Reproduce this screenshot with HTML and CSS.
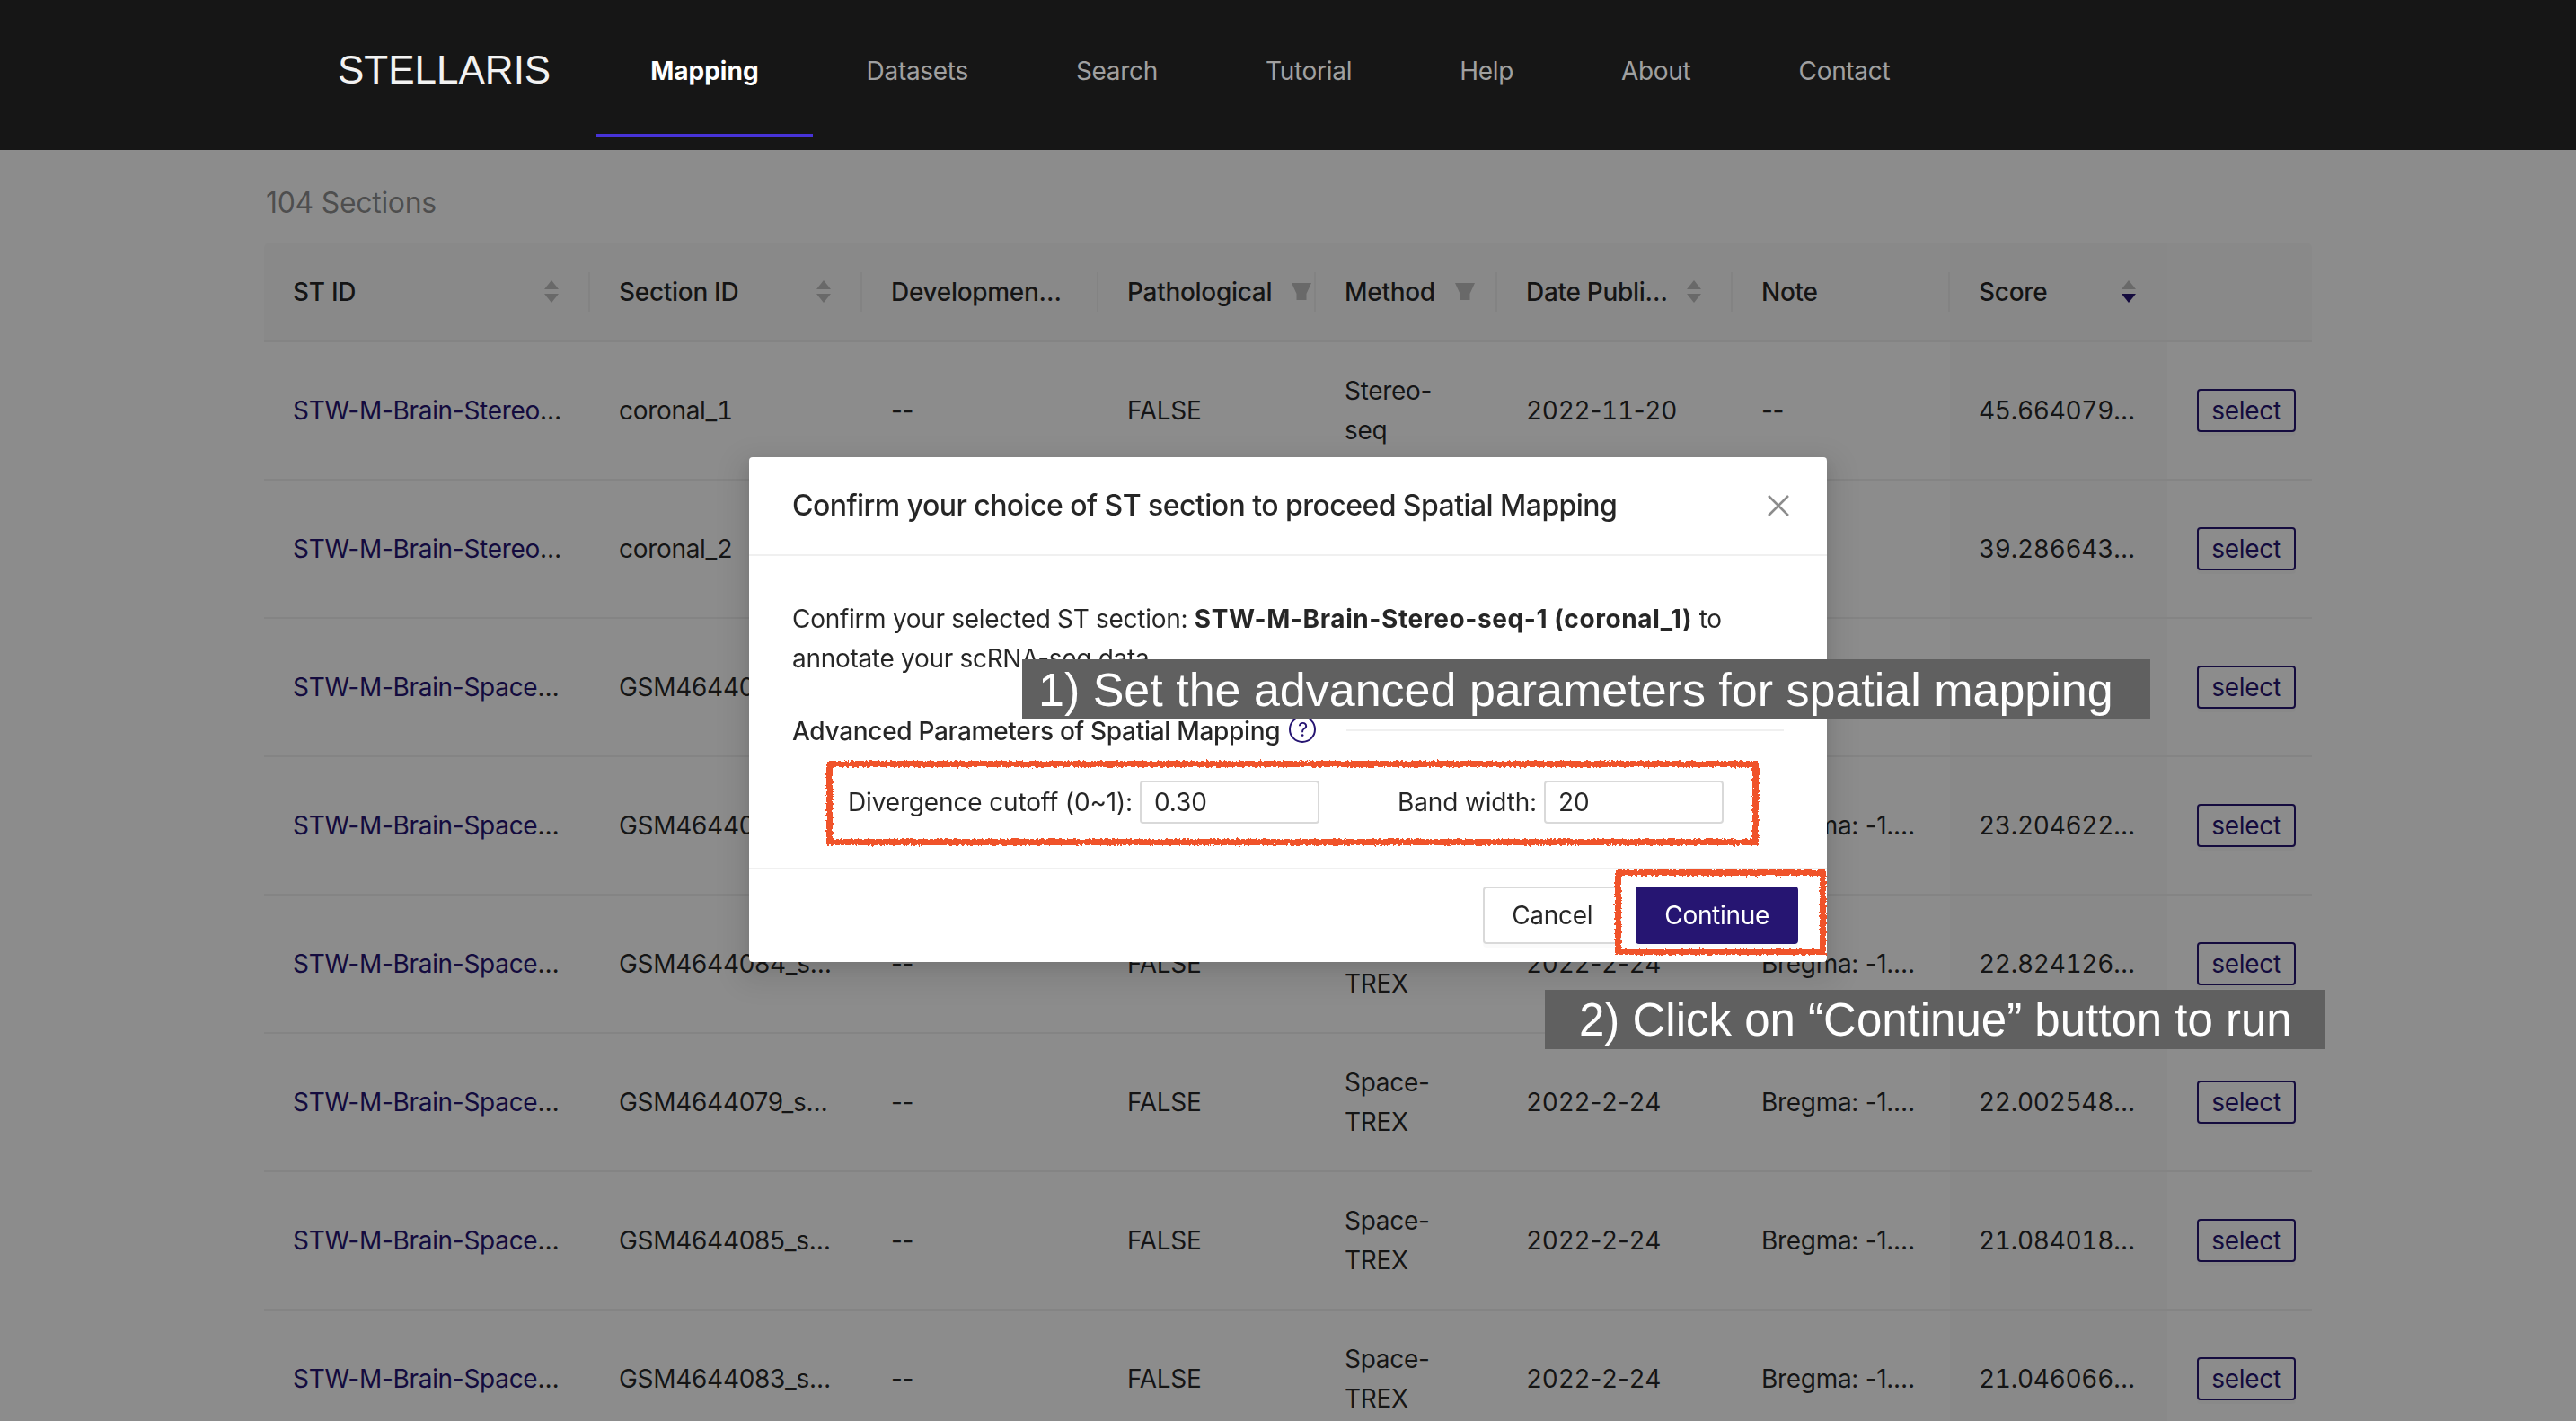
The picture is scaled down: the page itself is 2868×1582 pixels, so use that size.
FILE: index.html
```html
<!DOCTYPE html>
<html>

<head>
    <title>STELLARIS</title>
    <link rel="stylesheet" href="styles.css">
</head>

<body>
    <nav class="topbar">
        <div class="logo">STELLARIS</div>
        <a class="nav-item active">Mapping</a>
        <a class="nav-item">Datasets</a>
        <a class="nav-item">Search</a>
        <a class="nav-item">Tutorial</a>
        <a class="nav-item">Help</a>
        <a class="nav-item">About</a>
        <a class="nav-item">Contact</a>
    </nav>

    <main class="content">
        <div class="section-count">104 Sections</div>
        <table class="st-table">
            <colgroup>
                <col class="c-stid">
                <col class="c-section">
                <col class="c-dev">
                <col class="c-path">
                <col class="c-method">
                <col class="c-date">
                <col class="c-note">
                <col class="c-score">
                <col class="c-action">
            </colgroup>
            <thead>
                <tr>
                    <th>
                        <div class="th-inner"><span class="th-label">ST ID</span><span class="sorter"><i class="up"></i><i class="down"></i></span></div>
                    </th>
                    <th>
                        <div class="th-inner"><span class="th-label">Section ID</span><span class="sorter"><i class="up"></i><i class="down"></i></span></div>
                    </th>
                    <th>
                        <div class="th-inner"><span class="th-label">Developmental Stage</span></div>
                    </th>
                    <th class="th-filter">
                        <div class="th-inner"><span>Pathological</span><svg class="funnel" viewBox="0 0 22 19"><path d="M0 0H22L16.5 12V19H5.5V12Z"/></svg></div>
                    </th>
                    <th class="th-filter">
                        <div class="th-inner"><span>Method</span><svg class="funnel" viewBox="0 0 22 19"><path d="M0 0H22L16.5 12V19H5.5V12Z"/></svg></div>
                    </th>
                    <th>
                        <div class="th-inner"><span class="th-label">Date Published</span><span class="sorter"><i class="up"></i><i class="down"></i></span></div>
                    </th>
                    <th>
                        <div class="th-inner"><span class="th-label">Note</span></div>
                    </th>
                    <th class="sorted">
                        <div class="th-inner"><span class="th-label">Score</span><span class="sorter"><i class="up"></i><i class="down on"></i></span></div>
                    </th>
                    <th class="no-divider"></th>
                </tr>
            </thead>
            <tbody>
                <tr>
                    <td class="clip st-cell"><a class="st-link">STW-M-Brain-Stereo-seq-1</a></td>
                    <td class="clip num">coronal_1</td>
                    <td>--</td>
                    <td>FALSE</td>
                    <td>Stereo-seq</td>
                    <td><span class="num">2022</span>-<span class="num">11</span>-<span class="num">20</span></td>
                    <td>--</td>
                    <td class="clip sorted num">45.66407912345</td>
                    <td class="action"><button class="btn-select">select</button></td>
                </tr>
                <tr>
                    <td class="clip st-cell"><a class="st-link">STW-M-Brain-Stereo-seq-1</a></td>
                    <td class="clip num">coronal_2</td>
                    <td>--</td>
                    <td>FALSE</td>
                    <td>Stereo-seq</td>
                    <td><span class="num">2022</span>-<span class="num">11</span>-<span class="num">20</span></td>
                    <td>--</td>
                    <td class="clip sorted num">39.28664312345</td>
                    <td class="action"><button class="btn-select">select</button></td>
                </tr>
                <tr>
                    <td class="clip st-cell"><a class="st-link">STW-M-Brain-Space-TREX-1</a></td>
                    <td class="clip">GSM4644081_section</td>
                    <td>--</td>
                    <td>FALSE</td>
                    <td>Space-TREX</td>
                    <td><span class="num">2022</span>-<span class="num">2</span>-<span class="num">24</span></td>
                    <td class="clip">Bregma: -1.95 mm</td>
                    <td class="clip sorted num">24.10255812345</td>
                    <td class="action"><button class="btn-select">select</button></td>
                </tr>
                <tr>
                    <td class="clip st-cell"><a class="st-link">STW-M-Brain-Space-TREX-1</a></td>
                    <td class="clip">GSM4644080_section</td>
                    <td>--</td>
                    <td>FALSE</td>
                    <td>Space-TREX</td>
                    <td><span class="num">2022</span>-<span class="num">2</span>-<span class="num">24</span></td>
                    <td class="clip">Bregma: -1.95 mm</td>
                    <td class="clip sorted num">23.20462212345</td>
                    <td class="action"><button class="btn-select">select</button></td>
                </tr>
                <tr>
                    <td class="clip st-cell"><a class="st-link">STW-M-Brain-Space-TREX-1</a></td>
                    <td class="clip">GSM4644084_section</td>
                    <td>--</td>
                    <td>FALSE</td>
                    <td>Space-TREX</td>
                    <td><span class="num">2022</span>-<span class="num">2</span>-<span class="num">24</span></td>
                    <td class="clip">Bregma: -1.95 mm</td>
                    <td class="clip sorted num">22.82412612345</td>
                    <td class="action"><button class="btn-select">select</button></td>
                </tr>
                <tr>
                    <td class="clip st-cell"><a class="st-link">STW-M-Brain-Space-TREX-1</a></td>
                    <td class="clip">GSM4644079_section</td>
                    <td>--</td>
                    <td>FALSE</td>
                    <td>Space-TREX</td>
                    <td><span class="num">2022</span>-<span class="num">2</span>-<span class="num">24</span></td>
                    <td class="clip">Bregma: -1.95 mm</td>
                    <td class="clip sorted num">22.00254812345</td>
                    <td class="action"><button class="btn-select">select</button></td>
                </tr>
                <tr>
                    <td class="clip st-cell"><a class="st-link">STW-M-Brain-Space-TREX-1</a></td>
                    <td class="clip">GSM4644085_section</td>
                    <td>--</td>
                    <td>FALSE</td>
                    <td>Space-TREX</td>
                    <td><span class="num">2022</span>-<span class="num">2</span>-<span class="num">24</span></td>
                    <td class="clip">Bregma: -1.95 mm</td>
                    <td class="clip sorted num">21.08401812345</td>
                    <td class="action"><button class="btn-select">select</button></td>
                </tr>
                <tr>
                    <td class="clip st-cell"><a class="st-link">STW-M-Brain-Space-TREX-1</a></td>
                    <td class="clip">GSM4644083_section</td>
                    <td>--</td>
                    <td>FALSE</td>
                    <td>Space-TREX</td>
                    <td><span class="num">2022</span>-<span class="num">2</span>-<span class="num">24</span></td>
                    <td class="clip">Bregma: -1.95 mm</td>
                    <td class="clip sorted num">21.04606612345</td>
                    <td class="action"><button class="btn-select">select</button></td>
                </tr>
            </tbody>
        </table>
    </main>

    <div class="mask">
        <div class="modal">
            <div class="modal-head">
                <span class="modal-title">Confirm your choice of ST section to proceed Spatial Mapping</span>
                <svg class="modal-close" viewBox="0 0 24 24"><path d="M1 1L23 23M23 1L1 23"/></svg>
            </div>
            <div class="modal-body">
                <p class="confirm-text">Confirm your selected ST section: <strong>STW-M-Brain-Stereo-seq-1 (coronal_1)</strong> to annotate your scRNA-seq data.</p>
                <div class="adv-divider">
                    <span class="adv-title">Advanced Parameters of Spatial Mapping</span>
                    <span class="help-icon">?</span>
                    <span class="adv-line"></span>
                </div>
                <div class="param-row">
                    <label class="param">Divergence cutoff (0~1):<input class="param-input" value="0.30"></label>
                    <label class="param">Band width:<input class="param-input" value="20"></label>
                </div>
            </div>
            <div class="modal-foot">
                <button class="btn">Cancel</button>
                <button class="btn btn-primary">Continue</button>
            </div>
        </div>
    </div>

    <!-- tutorial annotations drawn on top of the screenshot -->
    <svg class="filter-defs">
        <filter id="rough" x="-5%" y="-15%" width="110%" height="130%">
            <feTurbulence type="fractalNoise" baseFrequency="0.35" numOctaves="2" seed="4" />
            <feDisplacementMap in="SourceGraphic" scale="5" />
        </filter>
    </svg>
    <div class="red-frame frame-params"></div>
    <div class="red-frame frame-continue"></div>
    <div class="callout callout-one">1) Set the advanced parameters for spatial mapping</div>
    <div class="callout callout-two">2) Click on “Continue” button to run</div>
</body>

</html>
```
FILE: styles.css
```css
html,
body {
    margin: 0;
    padding: 0;
    height: 100%;
    overflow: hidden;
}

body {
    font-family: Inter, "Noto Sans", sans-serif;
    font-size: 28px;
    line-height: 44px;
    letter-spacing: -0.3px;
    color: rgba(0, 0, 0, 0.85);
    background: #fff;
}

/* tabular digits, but not on the hyphens between them */
.num {
    font-feature-settings: 'tnum';
}

/* top navigation stays above the mask */
.topbar {
    position: relative;
    z-index: 20;
    display: flex;
    height: 167px;
    padding-left: 376px;
    box-sizing: border-box;
    background: #161616;
}

.logo {
    font-family: "Liberation Sans", Arial, sans-serif;
    font-size: 44px;
    line-height: 156px;
    letter-spacing: 0;
    color: #f2f2f2;
    margin-right: 51px;
}

.nav-item {
    padding: 0 60px;
    height: 152px;
    box-sizing: border-box;
    line-height: 158px;
    color: #a0a0a0;
}

.nav-item.active {
    color: #fff;
    font-weight: 700;
    letter-spacing: 0;
    border-bottom: 3px solid #4733d8;
}

.content {
    padding: 37px 294px 0 294px;
}

.section-count {
    font-size: 32px;
    line-height: 44px;
    padding-left: 2px;
    margin-bottom: 22px;
    color: rgba(0, 0, 0, 0.45);
}

/* table */
.st-table {
    width: 2280px;
    table-layout: fixed;
    border-collapse: collapse;
}

.c-stid { width: 363px; }
.c-section { width: 303px; }
.c-dev { width: 263px; }
.c-path { width: 242px; }
.c-method { width: 202px; }
.c-date { width: 262px; }
.c-note { width: 242px; }
.c-score { width: 242px; }
.c-action { width: 161px; }

.st-table th {
    height: 110px;
    padding: 0 32px;
    box-sizing: border-box;
    text-align: left;
    font-weight: 500;
    background: #fafafa linear-gradient(#eee, #eee) no-repeat right center / 2px 44px;
    border-bottom: 2px solid #f0f0f0;
}

.st-table th:first-child {
    border-top-left-radius: 6px;
}

.st-table th.no-divider {
    background: #fafafa;
    border-top-right-radius: 6px;
}

.st-table th.sorted {
    background: #f8f8f8;
}

.st-table th.th-filter {
    padding-right: 8px;
}

.th-inner {
    display: flex;
    align-items: center;
    justify-content: space-between;
}

.th-filter .th-inner {
    justify-content: flex-start;
    gap: 22px;
}

.th-label {
    overflow: hidden;
    white-space: nowrap;
    text-overflow: ellipsis;
}

.sorter {
    flex: none;
    display: flex;
    flex-direction: column;
    gap: 5px;
    margin: 0 3px 0 10px;
}

.sorter i {
    display: block;
    width: 0;
    height: 0;
    border-left: 8px solid transparent;
    border-right: 8px solid transparent;
}

.sorter .up {
    border-bottom: 10px solid #bfbfbf;
}

.sorter .down {
    border-top: 10px solid #bfbfbf;
}

.sorter .down.on {
    border-top-color: #261572;
}

.funnel {
    flex: none;
    width: 22px;
    height: 19px;
    fill: #bfbfbf;
}

.st-table td {
    height: 154px;
    padding: 0 32px;
    box-sizing: border-box;
    border-bottom: 2px solid #f0f0f0;
}

.st-table td.clip {
    overflow: hidden;
    white-space: nowrap;
    text-overflow: ellipsis;
}

.st-table td.st-cell {
    padding-right: 26px;
}

.st-table td.sorted {
    background: #fafafa;
}

.st-table td.action {
    padding-right: 0;
}

.st-link {
    color: #261572;
}

.btn-select {
    display: block;
    width: 110px;
    height: 48px;
    margin-left: 1px;
    padding: 0;
    font: inherit;
    letter-spacing: inherit;
    line-height: 44px;
    color: #261572;
    background: #fff;
    border: 2px solid #261572;
    border-radius: 4px;
    box-shadow: 0 4px 0 rgba(0, 0, 0, 0.02);
}

/* modal */
.mask {
    position: fixed;
    top: 0;
    left: 0;
    right: 0;
    bottom: 0;
    z-index: 10;
    display: flex;
    justify-content: center;
    align-items: flex-start;
    padding-top: 509px;
    box-sizing: border-box;
    background: rgba(0, 0, 0, 0.45);
}

.modal {
    width: 1200px;
    height: 562px;
    background: #fff;
    border-radius: 4px;
    box-shadow: 0 12px 32px 16px rgba(0, 0, 0, 0.08), 0 6px 16px rgba(0, 0, 0, 0.1);
}

.modal-head {
    display: flex;
    align-items: center;
    justify-content: space-between;
    height: 110px;
    padding: 0 42px 0 48px;
    box-sizing: border-box;
    border-bottom: 2px solid #f0f0f0;
}

.modal-title {
    font-size: 32px;
    font-weight: 500;
    letter-spacing: -0.55px;
}

.modal-close {
    width: 24px;
    height: 24px;
    fill: none;
    stroke: #8c8c8c;
    stroke-width: 2.5;
}

.modal-body {
    height: 347px;
    padding: 48px 48px 0;
    box-sizing: border-box;
}

.confirm-text {
    margin: 0;
}

.confirm-text strong {
    font-weight: 700;
    letter-spacing: 0.6px;
}

.adv-divider {
    display: flex;
    align-items: center;
    margin-top: 37px;
    height: 44px;
}

.adv-title {
    font-weight: 500;
    white-space: nowrap;
}

.help-icon {
    flex: none;
    width: 30px;
    height: 30px;
    margin: -4px 0 0 10px;
    box-sizing: border-box;
    border: 2px solid #261572;
    border-radius: 50%;
    font-size: 22px;
    line-height: 26px;
    text-align: center;
    color: #261572;
}

.adv-line {
    flex: 1;
    height: 2px;
    margin: -2px 0 0 34px;
    background: #f0f0f0;
}

.param-row {
    display: flex;
    gap: 87px;
    margin-top: 33px;
    padding-left: 62px;
}

.param {
    display: flex;
    align-items: center;
    gap: 8px;
    white-space: nowrap;
    letter-spacing: -0.15px;
}

.param-input {
    width: 200px;
    height: 48px;
    padding: 0 14px;
    box-sizing: border-box;
    font: inherit;
    letter-spacing: inherit;
    color: rgba(0, 0, 0, 0.85);
    border: 2px solid #d9d9d9;
    border-radius: 4px;
    outline: none;
}

.modal-foot {
    display: flex;
    justify-content: flex-end;
    gap: 16px;
    height: 105px;
    padding: 19px 32px 0 0;
    box-sizing: border-box;
    border-top: 2px solid #f0f0f0;
}

.btn {
    height: 64px;
    padding: 0 30px;
    font: inherit;
    letter-spacing: inherit;
    line-height: 60px;
    color: rgba(0, 0, 0, 0.85);
    background: #fff;
    border: 2px solid #d9d9d9;
    border-radius: 4px;
    box-shadow: 0 4px 0 rgba(0, 0, 0, 0.02);
}

.btn-primary {
    color: #fff;
    background: #261572;
    border-color: #261572;
}

/* annotations */
.filter-defs {
    position: absolute;
    width: 0;
    height: 0;
}

.red-frame {
    position: absolute;
    z-index: 30;
    box-sizing: border-box;
    border: 7px solid #f0532b;
    filter: url(#rough);
}

.frame-params {
    left: 920px;
    top: 847px;
    width: 1038px;
    height: 94px;
}

.frame-continue {
    left: 1798px;
    top: 968px;
    width: 235px;
    height: 95px;
}

.callout {
    position: absolute;
    z-index: 30;
    font-family: "Liberation Sans", Arial, sans-serif;
    font-size: 52px;
    letter-spacing: 0;
    color: #fff;
    background: #606060;
    white-space: nowrap;
    box-sizing: border-box;
}

.callout-one {
    left: 1138px;
    top: 734px;
    width: 1256px;
    height: 67px;
    line-height: 68px;
    padding-left: 18px;
}

.callout-two {
    left: 1720px;
    top: 1102px;
    width: 869px;
    height: 66px;
    font-size: 51px;
    line-height: 68px;
    padding-left: 38px;
}
```
